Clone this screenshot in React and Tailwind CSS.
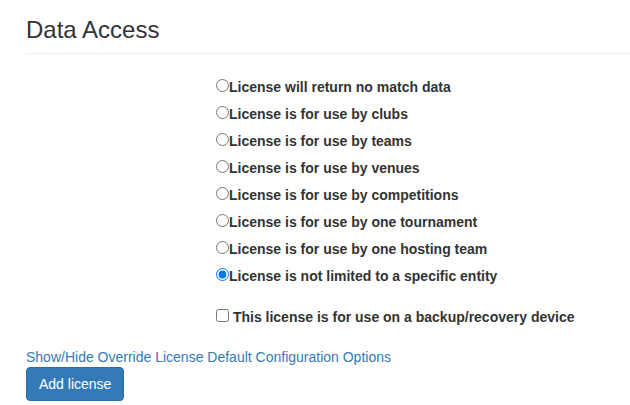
import React from "react";

const options = [
  "License will return no match data",
  "License is for use by clubs",
  "License is for use by teams",
  "License is for use by venues",
  "License is for use by competitions",
  "License is for use by one tournament",
  "License is for use by one hosting team",
  "License is not limited to a specific entity",
];

export default function App() {
  return (
    <div
      className="bg-white min-h-[405px] pl-[26px] text-[#333] text-[14px]"
      style={{ fontFamily: '"Liberation Sans", Arial, Helvetica, sans-serif' }}
    >
      <div className="pt-[17px]">
        <h3 className="text-[24px] leading-[26px] font-normal pb-[10px] border-b border-[#eeeeee]">
          Data Access
        </h3>
      </div>
      <div className="pl-[190px] mt-[20px]">
        {options.map((o, i) => (
          <div key={i} className="h-[27px] leading-[27px] font-bold whitespace-nowrap">
            <label>
              <input
                type="radio"
                name="access"
                defaultChecked={i === options.length - 1}
                className="m-0 w-[13px] h-[13px]"
              />
              {o}
            </label>
          </div>
        ))}
        <div className="mt-[14px] h-[27px] leading-[27px] font-bold whitespace-nowrap">
          <label>
            <input type="checkbox" className="m-0 w-[13px] h-[13px]" /> This license is for use on a backup/recovery device
          </label>
        </div>
      </div>
      <div className="mt-[16px] leading-[20px]">
        <a href="#" className="text-[#337ab7] no-underline">
          Show/Hide Override License Default Configuration Options
        </a>
      </div>
      <button className="bg-[#337ab7] border border-[#2e6da4] rounded-[4px] text-white px-[12px] py-[6px] leading-[20px] text-[14px]">
        Add license
      </button>
    </div>
  );
}
